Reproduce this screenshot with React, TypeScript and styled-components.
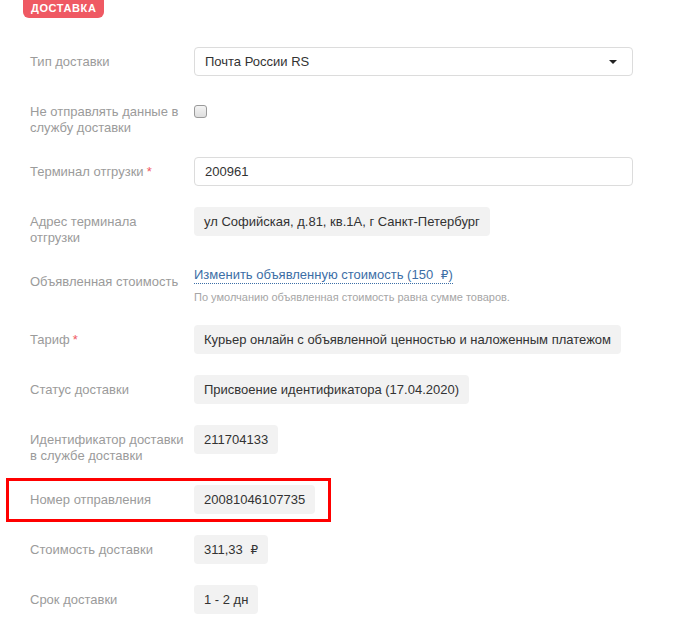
import styled, { createGlobalStyle } from 'styled-components';

const GlobalStyle = createGlobalStyle`
  body {
    margin: 0;
    background: #fff;
    font-family: "Liberation Sans", Arial, sans-serif;
  }
`;

const Wrapper = styled.div`
  padding: 0 0 0 30px;
  width: 685px;
  box-sizing: border-box;
`;

const Badge = styled.div`
  display: inline-block;
  vertical-align: top;
  margin-left: -7px;
  padding: 0 8px;
  height: 18px;
  line-height: 17px;
  background: #ef5963;
  color: #fff;
  font-size: 11px;
  font-weight: 700;
  letter-spacing: 0.6px;
  text-transform: uppercase;
  border-radius: 0 0 6px 6px;
`;

const Form = styled.div`
  margin-top: 29px;
  display: flex;
  flex-direction: column;
  gap: 21px;
`;

const Row = styled.div<{ $marked?: boolean }>`
  position: relative;
  display: grid;
  grid-template-columns: 160px 439px;
  column-gap: 4px;
  align-items: start;
  ${(p) =>
    p.$marked &&
    `
    &::before {
      content: '';
      position: absolute;
      left: -24px;
      top: -7px;
      width: 325px;
      height: 44px;
      border: 3px solid #f00;
      box-sizing: border-box;
    }
  `}
`;

const Label = styled.div`
  padding-top: 7px;
  font-size: 13px;
  line-height: 16px;
  color: #9b9b9b;
`;

const Req = styled.span`
  color: #ef5963;
  margin-left: 3px;
`;

const Select = styled.div`
  height: 29px;
  box-sizing: border-box;
  border: 1px solid #dcdcdc;
  border-radius: 4px;
  padding: 0 15px 0 10px;
  display: flex;
  align-items: center;
  justify-content: space-between;
  font-size: 13px;
  color: #333;
`;

const Caret = styled.span`
  width: 0;
  height: 0;
  border-left: 4px solid transparent;
  border-right: 4px solid transparent;
  border-top: 4px solid #222;
`;

const Input = styled.input`
  height: 29px;
  width: 100%;
  box-sizing: border-box;
  border: 1px solid #dcdcdc;
  border-radius: 4px;
  padding: 0 10px;
  font-family: inherit;
  font-size: 13px;
  color: #333;
  outline: none;
`;

const Check = styled.input`
  appearance: none;
  margin: 8px 0 0 0;
  width: 13px;
  height: 13px;
  box-sizing: border-box;
  border: 1px solid #9a9a9a;
  border-radius: 3px;
  background: linear-gradient(#f4f4f4, #dedede);
`;

const Value = styled.div`
  justify-self: start;
  height: 29px;
  line-height: 29px;
  padding: 0 10px;
  background: #f2f2f2;
  border-radius: 4px;
  font-size: 13px;
  color: #333;
  white-space: nowrap;
`;

const Declared = styled.div`
  display: flex;
  flex-direction: column;
  align-items: flex-start;
  gap: 6px;
`;

const Link = styled.a`
  font-size: 13px;
  line-height: 15px;
  color: #3c6ea6;
  text-decoration: none;
  border-bottom: 1px dotted #3c6ea6;
  cursor: pointer;
`;

const Hint = styled.div`
  font-size: 11px;
  line-height: 14px;
  color: #a6a6a6;
`;

const Rub = styled.span`
  font-family: "DejaVu Sans", sans-serif;
  font-size: 12px;
  margin-left: 4px;
`;

function App() {
  return (
    <Wrapper>
      <GlobalStyle />
      <Badge>Доставка</Badge>
      <Form>
        <Row>
          <Label>Тип доставки</Label>
          <Select>
            Почта России RS
            <Caret />
          </Select>
        </Row>
        <Row>
          <Label>Не отправлять данные в службу доставки</Label>
          <Check type="checkbox" />
        </Row>
        <Row>
          <Label>
            Терминал отгрузки<Req>*</Req>
          </Label>
          <Input type="text" defaultValue="200961" />
        </Row>
        <Row>
          <Label>Адрес терминала отгрузки</Label>
          <Value>ул Софийская, д.81, кв.1А, г Санкт-Петербург</Value>
        </Row>
        <Row>
          <Label>Объявленная стоимость</Label>
          <Declared>
            <Link>
              Изменить объявленную стоимость (150 <Rub>₽</Rub>)
            </Link>
            <Hint>По умолчанию объявленная стоимость равна сумме товаров.</Hint>
          </Declared>
        </Row>
        <Row>
          <Label>
            Тариф<Req>*</Req>
          </Label>
          <Value>Курьер онлайн с объявленной ценностью и наложенным платежом</Value>
        </Row>
        <Row>
          <Label>Статус доставки</Label>
          <Value>Присвоение идентификатора (17.04.2020)</Value>
        </Row>
        <Row>
          <Label>Идентификатор доставки в службе доставки</Label>
          <Value>211704133</Value>
        </Row>
        <Row $marked>
          <Label>Номер отправления</Label>
          <Value>20081046107735</Value>
        </Row>
        <Row>
          <Label>Стоимость доставки</Label>
          <Value>
            311,33 <Rub>₽</Rub>
          </Value>
        </Row>
        <Row>
          <Label>Срок доставки</Label>
          <Value>1 - 2 дн</Value>
        </Row>
      </Form>
    </Wrapper>
  );
}

export default App;
